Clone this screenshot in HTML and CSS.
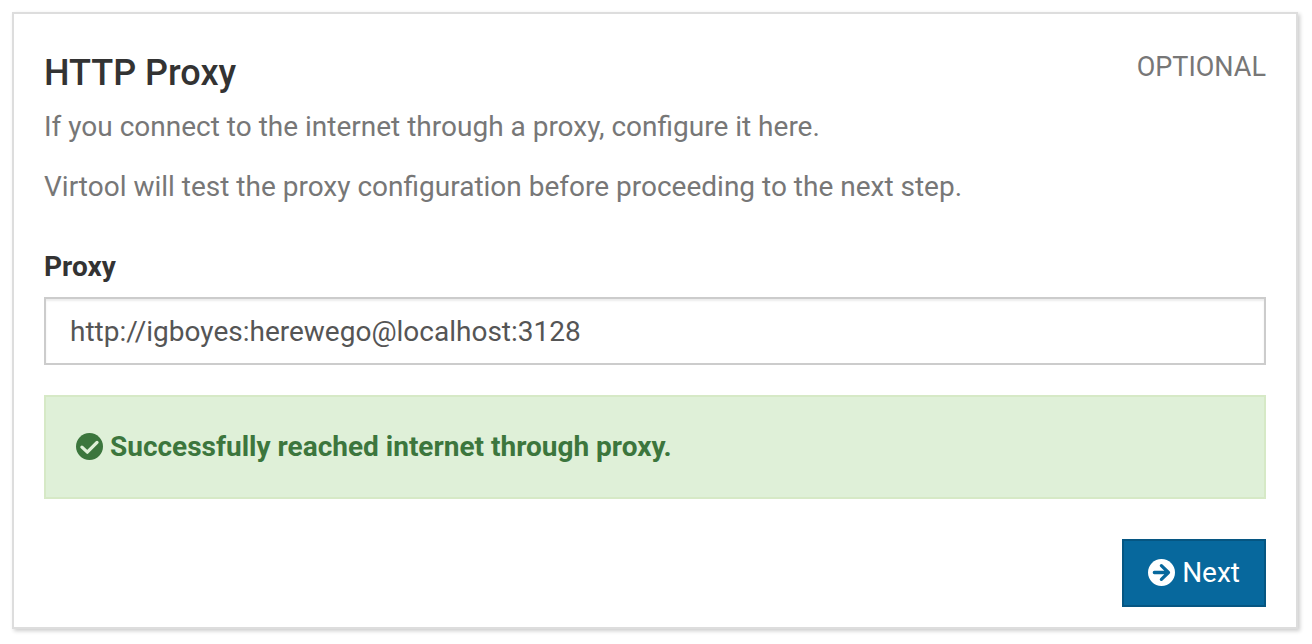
FILE: index.html
```html
<!DOCTYPE html>
<html lang="en">
<head>
<meta charset="utf-8">
<title>HTTP Proxy</title>
<link rel="stylesheet" href="styles.css">
</head>
<body>
<form class="panel">
  <header class="panel-header">
    <h1 class="panel-title">HTTP Proxy</h1>
    <span class="panel-note">OPTIONAL</span>
  </header>
  <p class="description">If you connect to the internet through a proxy, configure it here.</p>
  <p class="description">Virtool will test the proxy configuration before proceeding to the next step.</p>
  <label class="label" for="proxy">Proxy</label>
  <input class="input" id="proxy" type="text" value="http://igboyes:herewego@localhost:3128">
  <div class="alert" role="status">
    <svg class="icon" viewBox="8 8 496 496" aria-hidden="true"><path fill="currentColor" d="M504 256c0 136.967-111.033 248-248 248S8 392.967 8 256 119.033 8 256 8s248 111.033 248 248z"/><path class="check" d="M117 268L216 360L394 180"/></svg>
    <strong>Successfully reached internet through proxy.</strong>
  </div>
  <footer class="panel-footer">
    <button class="button" type="button">
      <svg class="icon" viewBox="8 8 496 496" aria-hidden="true"><path fill="currentColor" d="M256 8c137 0 248 111 248 248S393 504 256 504 8 393 8 256 119 8 256 8z"/><path class="arrow" d="M124 256H384M254 130L384 256L254 382"/></svg>
      <span>Next</span>
    </button>
  </footer>
</form>
</body>
</html>
```
FILE: styles.css
```css
* {
  box-sizing: border-box;
}

body {
  margin: 0;
  padding: 12px 14px 12px 12px;
  background: #fff;
  color: #333;
  font: 28px/40px Roboto, sans-serif;
}

.panel {
  padding: 33px 30px 20px;
  border: 2px solid #ddd;
  box-shadow: 2px 2px 4px rgba(0, 0, 0, 0.2);
}

.panel-header {
  display: flex;
  justify-content: space-between;
  align-items: flex-start;
}

.panel-title {
  margin: 6px 0 14px;
  font-size: 36px;
  line-height: 40px;
  font-weight: 500;
}

.panel-note,
.description {
  color: #777;
}

.panel-note {
  font-size: 27px;
}

.description {
  margin: 0 0 20px;
}

.label {
  display: block;
  margin: 40px 0 10px;
  font-weight: 700;
}

.input {
  display: block;
  width: 100%;
  height: 68px;
  padding: 12px 24px;
  border: 2px solid #ccc;
  border-radius: 0;
  background: #fff;
  box-shadow: inset 0 2px 2px rgba(0, 0, 0, 0.075);
  color: #555;
  font: inherit;
}

.alert {
  display: flex;
  align-items: center;
  gap: 7px;
  margin: 30px 0 40px;
  padding: 30px;
  border: 2px solid #d6e9c6;
  background: #dff0d8;
  color: #3c763d;
}

.icon {
  flex: none;
  width: 27px;
  height: 27px;
  margin-bottom: 2px;
}

.check,
.arrow {
  fill: none;
  stroke-linecap: round;
  stroke-linejoin: round;
}

.check {
  stroke: #dff0d8;
  stroke-width: 60;
}

.arrow {
  stroke: #07689d;
  stroke-width: 60;
}

.panel-footer {
  display: flex;
  justify-content: flex-end;
}

.button {
  display: flex;
  align-items: center;
  gap: 7px;
  padding: 12px 24px;
  border: 2px solid #065682;
  background: #07689d;
  color: #fff;
  font: inherit;
}
```
